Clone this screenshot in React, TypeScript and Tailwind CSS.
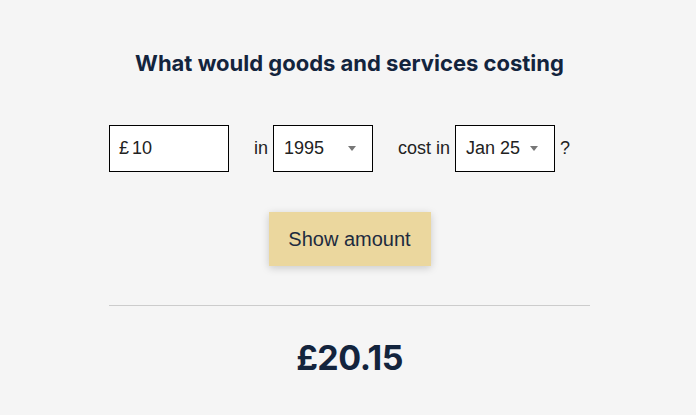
export default function App() {
  return (
    <div className="min-h-[415px] w-full bg-[#f5f5f5] font-['Liberation_Sans',Arial,sans-serif]">
      <div className="ml-[109px] w-[481px] pt-[48px]">
        <h2 className="text-center font-['Inter',sans-serif] text-[22px] font-bold leading-[30px] text-[#13243d]">
          What would goods and services costing
        </h2>

        <div className="mt-[47px] flex items-center text-[18px] text-[#222]">
          <div className="flex h-[47px] w-[120px] items-center border border-black bg-white px-[9px]">
            <span>£</span>
            <span className="ml-[3px]">10</span>
          </div>
          <span className="ml-[25px] mr-[5px]">in</span>
          <Select value="1995" />
          <span className="ml-[25px] mr-[5px]">cost in</span>
          <Select value="Jan 25" />
          <span className="ml-[5px]">?</span>
        </div>

        <div className="mt-[40px] flex justify-center">
          <button className="h-[54px] w-[162px] bg-[#ebd79e] text-[20px] text-[#1d2b3e] shadow-[0_2px_8px_rgba(0,0,0,0.18)]">
            Show amount
          </button>
        </div>

        <hr className="mt-[39px] border-0 border-t border-[#cccccc]" />

        <p className="mt-[30px] text-center font-['Inter',sans-serif] text-[34px] font-bold leading-[44px] tracking-[-0.5px] text-[#13243d]">
          £20.15
        </p>
      </div>
    </div>
  );
}

function Select({ value }: { value: string }) {
  return (
    <div className="flex h-[47px] w-[100px] items-center justify-between border border-black bg-white pl-[10px] pr-[16px]">
      <span>{value}</span>
      <svg width="8" height="5" viewBox="0 0 8 5">
        <path d="M0 0h8L4 5z" fill="#777" />
      </svg>
    </div>
  );
}
